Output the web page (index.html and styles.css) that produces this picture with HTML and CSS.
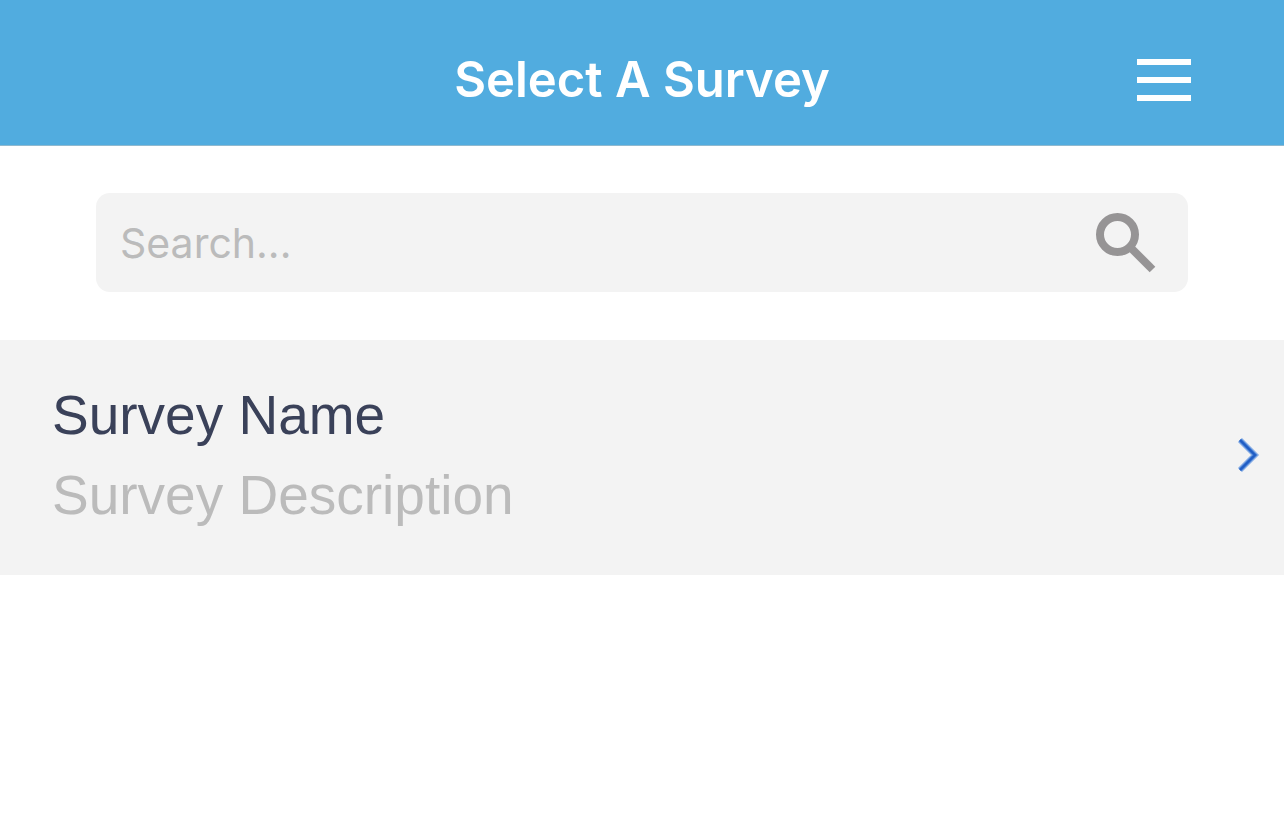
FILE: index.html
```html
<!DOCTYPE html>
<html lang="en">
<head>
  <meta charset="UTF-8" />
  <meta name="viewport" content="width=device-width, initial-scale=1.0"/>
  <title>Select A Survey</title>
  <link rel="stylesheet" href="styles.css">
</head>
<body>
  <header class="header">
    <h1>Select A Survey</h1>
    <button type="button" class="menu-btn" aria-label="Menu">
      <svg viewBox="0 0 54 42" width="54" height="42">
        <path d="M0 3h54M0 21h54M0 39h54" stroke="#fff" stroke-width="6"/>
      </svg>
    </button>
  </header>

  <main>
    <form class="search">
      <input type="text" id="search" placeholder="Search..." aria-label="Search">
      <button type="submit" class="search-btn" aria-label="Search">
        <svg viewBox="0 0 60 60" width="60" height="60" fill="none" stroke="#969495" stroke-width="8">
          <circle cx="21.500" cy="21.500" r="17.500"/>
          <path d="M33 33l23.500 23.500"/>
        </svg>
      </button>
    </form>

    <a href="#" class="survey">
      <div class="survey-text">
        <h2>Survey Name</h2>
        <p>Survey Description</p>
      </div>
      <svg class="arrow" viewBox="0 0 22 36" width="22" height="36" fill="none">
        <path d="M2 3l15 15L2 33" stroke="#9dbce9" stroke-width="6"/>
        <path d="M2 3l15 15L2 33" stroke="#4d84d6" stroke-width="4"/>
        <path d="M2 3l15 15L2 33" stroke="#1f5cc4" stroke-width="2"/>
      </svg>
    </a>
  </main>
</body>
</html>
```

FILE: styles.css
```css
body {
  margin: 0;
  background-color: #fff;
  font-family: "Liberation Sans", Arial, sans-serif;
}

h1, h2, p {
  margin: 0;
  font-weight: normal;
}

button {
  padding: 0;
  border: none;
  background: none;
  cursor: pointer;
}

svg {
  display: block;
}

.header {
  display: grid;
  grid-template-columns: 1fr auto 1fr;
  align-items: center;
  padding: 48px 93px 33px;
  background-color: #51acdf;
  border-bottom: 1px solid #8fb9cf;
}

.header h1 {
  grid-column: 2;
  font-family: Inter, sans-serif;
  font-size: 49px;
  font-weight: 600;
  line-height: 64px;
  color: #fff;
}

.menu-btn {
  justify-self: end;
}

.search {
  display: flex;
  align-items: center;
  margin: 47px 96px 48px;
  padding: 0 32px 0 24px;
  background-color: #f3f3f3;
  border-radius: 14px;
}

.search input {
  flex: 1;
  min-width: 0;
  height: 99px;
  padding: 0;
  border: none;
  outline: none;
  background: none;
  font-family: Inter, sans-serif;
  font-size: 41px;
  color: #3a4159;
}

.search input::placeholder {
  color: #bbb;
}

.survey {
  display: flex;
  align-items: center;
  justify-content: space-between;
  padding: 35px 24px 40px 52px;
  background-color: #f3f3f3;
  text-decoration: none;
}

.survey-text {
  font-size: 55px;
  line-height: 80px;
}

.survey h2 {
  font-size: 55px;
  color: #3a4159;
}

.survey p {
  color: #bbb;
}
```
